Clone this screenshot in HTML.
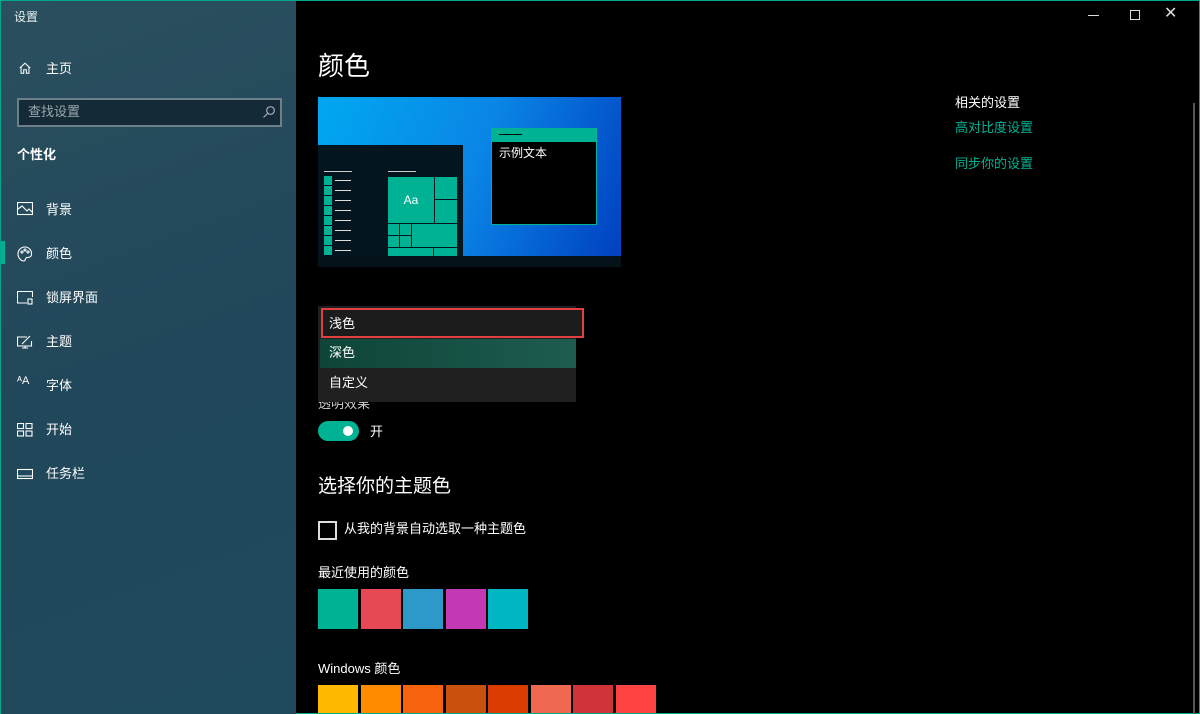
<!DOCTYPE html>
<html><head><meta charset="utf-8"><style>
*{margin:0;padding:0;box-sizing:border-box}
html,body{width:1200px;height:714px;overflow:hidden}
body{background:#000;font-family:"Liberation Sans","Noto Sans CJK SC",sans-serif;color:#fff;position:relative}
.a{position:absolute}
#side{left:0;top:0;width:296px;height:714px;background:linear-gradient(160deg,#2b4f5e 0%,#21475a 50%,#1f4a5d 100%);border-left:1px solid #00a88a;border-top:1px solid #00a88a}
.nav{position:absolute;left:45px;font-size:13px;color:#fff}
.ic{position:absolute;left:16px;width:16px;height:14px}
.t{font-size:13px}
.sw{position:absolute;width:40px;height:40px}
</style></head><body>
<div id="side" class="a">
<div class="a" style="left:13px;top:7px;font-size:12px;color:#e8eef0">设置</div>
<svg class="ic" style="top:60px" viewBox="0 0 16 16" fill="none" stroke="#fff" stroke-width="1.2"><path d="M2 8L8 2.5 14 8M3.5 6.5V14h3v-4h3v4h3V6.5"/></svg>
<div class="nav" style="top:57px">主页</div>
<div class="a" style="left:16px;top:97px;width:265px;height:29px;background:#152a37;border:2px solid #6d7f89"></div>
<div class="a" style="left:27px;top:100px;font-size:13px;color:#9aa7ad">查找设置</div>
<svg class="a" style="left:261px;top:104px;width:14px;height:14px" viewBox="0 0 14 14" fill="none" stroke="#aab" stroke-width="1.2"><circle cx="8.5" cy="5.5" r="3.8"/><path d="M5.7 8.3L1.5 12.5"/></svg>
<div class="a" style="left:16px;top:143px;font-size:13px;font-weight:bold">个性化</div>
<svg class="ic" style="top:201px" viewBox="0 0 16 14" fill="none" stroke="#fff" stroke-width="1.1"><rect x="0.5" y="0.5" width="15" height="12"/><path d="M1 7l4-3 5 5 2-2 3 3"/></svg>
<div class="nav" style="top:198px">背景</div>
<div class="a" style="left:0;top:240px;width:4px;height:23px;background:#00b294"></div>
<svg class="ic" style="top:245px;height:16px" viewBox="0 0 16 16" fill="none" stroke="#fff" stroke-width="1.1"><path d="M8 1C4 1 1 4 1 8s3 7 6 7c1.5 0 1-2 2-3s4 0 5-2C16 5 12 1 8 1z"/><circle cx="5" cy="6" r="1"/><circle cx="8" cy="4" r="1"/><circle cx="11" cy="6" r="1"/></svg>
<div class="nav" style="top:242px">颜色</div>
<svg class="ic" style="top:290px" viewBox="0 0 16 14" fill="none" stroke="#fff" stroke-width="1.1"><path d="M10 12H0.5V0.5h15V6"/><rect x="11" y="8" width="4" height="5"/></svg>
<div class="nav" style="top:286px">锁屏界面</div>
<svg class="ic" style="top:334px" viewBox="0 0 16 14" fill="none" stroke="#fff" stroke-width="1.1"><path d="M10 2H0.5v9h14V6M5 13h6M8 11v2M5 9l8-8"/></svg>
<div class="nav" style="top:330px">主题</div>
<div class="a" style="left:16px;top:374px;font-size:11px">ᴬA</div>
<div class="nav" style="top:374px">字体</div>
<svg class="ic" style="top:422px" viewBox="0 0 16 14" fill="none" stroke="#fff" stroke-width="1.1"><rect x="0.5" y="0.5" width="6" height="5"/><rect x="0.5" y="8" width="6" height="5"/><rect x="9" y="0.5" width="6" height="5"/><rect x="9" y="8" width="6" height="5"/></svg>
<div class="nav" style="top:418px">开始</div>
<svg class="ic" style="top:467px" viewBox="0 0 16 14" fill="none" stroke="#fff" stroke-width="1.1"><rect x="0.5" y="1.5" width="15" height="9"/><path d="M1 8h14"/></svg>
<div class="nav" style="top:462px">任务栏</div>
</div>
<div class="a" style="left:296px;top:0;width:904px;height:1px;background:#00a88a"></div>
<div class="a" style="left:1199px;top:0;width:1px;height:714px;background:#00a88a"></div>
<div class="a" style="left:296px;top:713px;width:904px;height:1px;background:#00a88a"></div>
<div class="a" style="left:1088px;top:15px;width:11px;height:1px;background:#ddd"></div>
<div class="a" style="left:1130px;top:10px;width:10px;height:10px;border:1px solid #ddd"></div>
<div class="a" style="left:1164px;top:3px;font-size:16px;color:#ddd">✕</div>
<div class="a" style="left:1193px;top:103px;width:2px;height:611px;background:#555"></div>
<div class="a" style="left:318px;top:46px;font-size:26px">颜色</div>
<div class="a" style="left:318px;top:97px;width:303px;height:160px;background:linear-gradient(110deg,#00a8f0 0%,#0a86e6 50%,#0040c0 100%)"></div>
<div class="a" style="left:318px;top:256px;width:303px;height:11px;background:#06121a"></div>
<div class="a" style="left:318px;top:145px;width:145px;height:111px;background:#05151f"></div>
<div class="a" style="left:324px;top:171px;width:28px;height:1px;background:#ccc"></div>
<div class="a" style="left:324px;top:176px;width:8px;height:80px;background:repeating-linear-gradient(#00b294 0 9px,#05151f 9px 10px)"></div>
<div class="a" style="left:335px;top:180px;width:16px;height:72px;background:repeating-linear-gradient(#ddd 0 1px,transparent 1px 10px)"></div>
<div class="a" style="left:388px;top:171px;width:28px;height:1px;background:#ccc"></div>
<div class="a" style="left:388px;top:177px;width:46px;height:46px;background:#00b294;text-align:center;line-height:46px;font-size:12px">Aa</div>
<div class="a" style="left:435px;top:177px;width:22px;height:22px;background:#00b294"></div>
<div class="a" style="left:435px;top:200px;width:22px;height:23px;background:#00b294"></div>
<div class="a" style="left:388px;top:224px;width:11px;height:11px;background:#00b294"></div>
<div class="a" style="left:400px;top:224px;width:11px;height:11px;background:#00b294"></div>
<div class="a" style="left:388px;top:236px;width:11px;height:11px;background:#00b294"></div>
<div class="a" style="left:400px;top:236px;width:11px;height:11px;background:#00b294"></div>
<div class="a" style="left:412px;top:224px;width:45px;height:23px;background:#00b294"></div>
<div class="a" style="left:388px;top:248px;width:45px;height:8px;background:#00b294"></div>
<div class="a" style="left:434px;top:248px;width:23px;height:8px;background:#00b294"></div>
<div class="a" style="left:491px;top:128px;width:106px;height:97px;background:#000;border:1px solid #00b294"></div>
<div class="a" style="left:491px;top:128px;width:106px;height:14px;background:#00b294"></div>
<div class="a" style="left:499px;top:134px;width:23px;height:1px;background:#000"></div>
<div class="a" style="left:499px;top:144px;font-size:12px">示例文本</div>
<div class="a" style="left:318px;top:393px;font-size:13px;color:#ccc">透明效果</div>
<div class="a" style="left:318px;top:306px;width:258px;height:96px;background:#202020"></div>
<div class="a" style="left:321px;top:308px;width:263px;height:30px;border:2px solid #e04040;background:#1c1c1c"></div>
<div class="a t" style="left:329px;top:313px">浅色</div>
<div class="a" style="left:320px;top:339px;width:256px;height:29px;background:linear-gradient(90deg,#0e4538,#1e5c50)"></div>
<div class="a t" style="left:329px;top:342px">深色</div>
<div class="a t" style="left:329px;top:372px">自定义</div>
<div class="a" style="left:318px;top:421px;width:41px;height:20px;border-radius:10px;background:#00b294"></div>
<div class="a" style="left:343px;top:426px;width:10px;height:10px;border-radius:5px;background:#fff"></div>
<div class="a t" style="left:370px;top:421px">开</div>
<div class="a" style="left:318px;top:471px;font-size:19px">选择你的主题色</div>
<div class="a" style="left:318px;top:521px;width:19px;height:19px;border:2px solid #ddd"></div>
<div class="a t" style="left:344px;top:518px">从我的背景自动选取一种主题色</div>
<div class="a t" style="left:318px;top:562px">最近使用的颜色</div>
<div class="sw" style="left:318px;top:589px;background:#00b294"></div>
<div class="sw" style="left:361px;top:589px;background:#e74856"></div>
<div class="sw" style="left:403px;top:589px;background:#2d99c8"></div>
<div class="sw" style="left:446px;top:589px;background:#c239b3"></div>
<div class="sw" style="left:488px;top:589px;background:#00b7c3"></div>
<div class="a t" style="left:318px;top:658px">Windows 颜色</div>
<div class="sw" style="left:318px;top:685px;height:28px;background:#ffb900"></div>
<div class="sw" style="left:361px;top:685px;height:28px;background:#ff8c00"></div>
<div class="sw" style="left:403px;top:685px;height:28px;background:#f7630c"></div>
<div class="sw" style="left:446px;top:685px;height:28px;background:#ca5010"></div>
<div class="sw" style="left:488px;top:685px;height:28px;background:#da3b01"></div>
<div class="sw" style="left:531px;top:685px;height:28px;background:#ef6950"></div>
<div class="sw" style="left:573px;top:685px;height:28px;background:#d13438"></div>
<div class="sw" style="left:616px;top:685px;height:28px;background:#ff4343"></div>
<div class="a t" style="left:955px;top:92px">相关的设置</div>
<div class="a t" style="left:955px;top:117px;color:#00b294">高对比度设置</div>
<div class="a t" style="left:955px;top:153px;color:#00b294">同步你的设置</div>
</body></html>
